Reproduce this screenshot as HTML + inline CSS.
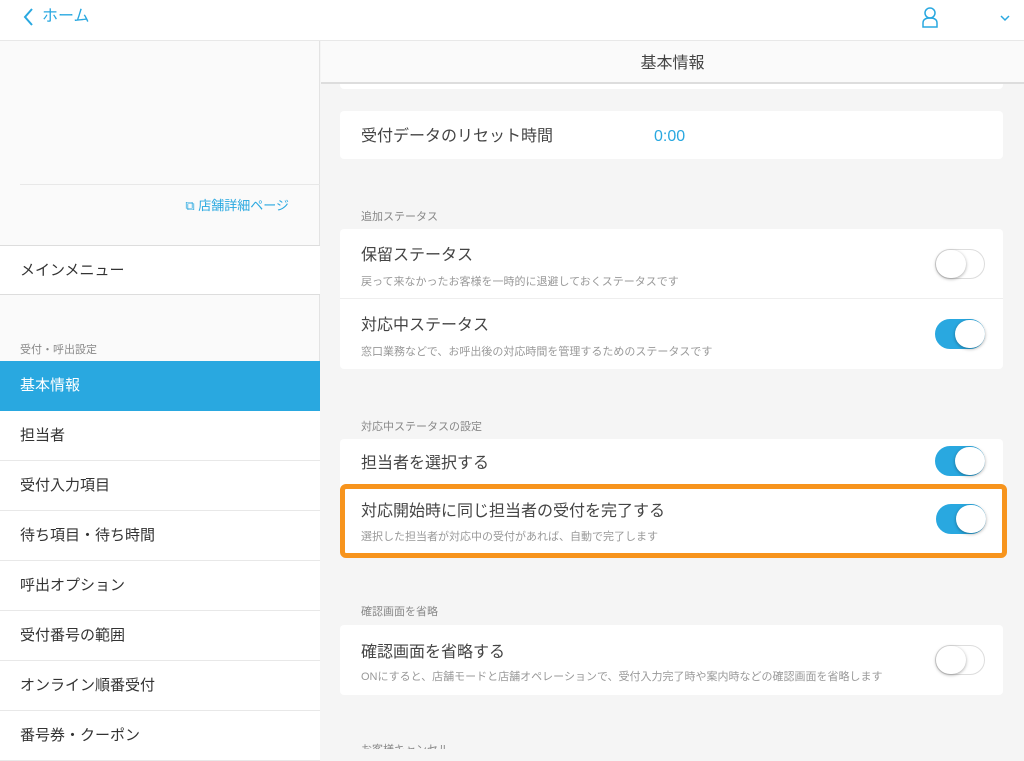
<!DOCTYPE html><html><head><meta charset="utf-8"><style>
*{box-sizing:border-box;margin:0;padding:0}
body{width:1024px;height:749px;overflow:hidden;font-family:"Liberation Sans","Noto Sans CJK JP",sans-serif;background:#f5f5f5;position:relative;color:#333}
.hdr{position:absolute;left:0;top:0;width:1024px;height:41px;background:#fff;border-bottom:1px solid #e8e8e8}
.side{position:absolute;left:0;top:41px;width:320px;height:708px;background:#fafafa;border-right:1px solid #e3e3e3}
.main{position:absolute;left:321px;top:41px;width:703px;height:708px;background:#f5f5f5;overflow:hidden}
.tb{position:absolute;left:0;top:0;width:703px;height:43px;background:#fafafa;border-bottom:2px solid #ddd;text-align:center;line-height:45px;font-size:16px;color:#444}
.card{position:absolute;left:19px;width:663px;background:#fff;border-radius:4px}
.t{position:absolute;left:21px;font-size:16px;line-height:20px;color:#444;margin-top:3px}
.s{position:absolute;left:21px;font-size:11px;line-height:14px;color:#999;margin-top:2px}
.lbl{position:absolute;left:40px;font-size:11px;line-height:14px;color:#888;margin-top:2px}
.tg{position:absolute;right:18px;width:50px;height:30px;border-radius:15px;background:#fff;border:1px solid #ddd}
.tg i{position:absolute;left:0;top:0;width:30px;height:28px;border-radius:14px;background:#fff;box-shadow:0 1px 3px rgba(0,0,0,.35)}
.tg.on{background:#29a8e0;border-color:#29a8e0}
.tg.on i{left:19px}
.mi{position:absolute;left:0;width:320px;height:50px;line-height:50px;padding-left:20px;font-size:15px;color:#333;background:#fff;border-bottom:1px solid #e8e8e8}
</style></head><body>
<div class="hdr">
<svg style="position:absolute;left:22px;top:7px" width="12" height="20"><path d="M10 2 L3 10 L10 18" stroke="#29a8e0" stroke-width="2" fill="none"/></svg>
<span style="position:absolute;left:42px;top:7px;font-size:16px;line-height:20px;color:#29a8e0">ホーム</span>
<svg style="position:absolute;left:920px;top:6px" width="20" height="22"><circle cx="10" cy="7" r="5" stroke="#29a8e0" stroke-width="1.5" fill="none"/><path d="M3 21 V17 Q3 12 10 12 Q17 12 17 17 V21 Z" stroke="#29a8e0" stroke-width="1.5" fill="none"/></svg>
<svg style="position:absolute;left:1000px;top:14px" width="10" height="8"><path d="M1 2 L5 6 L9 2" stroke="#29a8e0" stroke-width="1.5" fill="none"/></svg>
</div>
<div class="side">
<div style="position:absolute;left:20px;top:143px;width:300px;border-top:1px solid #e8e8e8"></div>
<span style="position:absolute;right:30px;top:157px;font-size:13px;line-height:16px;color:#29a8e0">⧉ 店舗詳細ページ</span>
<div class="mi" style="top:204px;border-top:1px solid #ddd;border-bottom:1px solid #ddd">メインメニュー</div>
<span style="position:absolute;left:20px;top:300px;font-size:11px;color:#888">受付・呼出設定</span>
<div class="mi" style="top:320px;background:#29a8e0;color:#fff;border:0">基本情報</div>
<div class="mi" style="top:370px">担当者</div>
<div class="mi" style="top:420px">受付入力項目</div>
<div class="mi" style="top:470px">待ち項目・待ち時間</div>
<div class="mi" style="top:520px">呼出オプション</div>
<div class="mi" style="top:570px">受付番号の範囲</div>
<div class="mi" style="top:620px">オンライン順番受付</div>
<div class="mi" style="top:670px">番号券・クーポン</div>
</div>
<div class="main">
<div class="card" style="top:40px;height:8px;border-radius:0 0 4px 4px"></div>
<div class="tb">基本情報</div>
<div class="card" style="top:70px;height:48px"><span class="t" style="top:13px">受付データのリセット時間</span><span class="t" style="left:314px;top:13px;color:#29a8e0">0:00</span></div>
<span class="lbl" style="top:167px">追加ステータス</span>
<div class="card" style="top:188px;height:140px">
<span class="t" style="top:14px">保留ステータス</span><span class="s" style="top:44px">戻って来なかったお客様を一時的に退避しておくステータスです</span><div class="tg" style="top:20px"><i></i></div>
<div style="position:absolute;left:0;top:69px;width:663px;border-top:1px solid #eee"></div>
<span class="t" style="top:84px">対応中ステータス</span><span class="s" style="top:114px">窓口業務などで、お呼出後の対応時間を管理するためのステータスです</span><div class="tg on" style="top:90px"><i></i></div>
</div>
<span class="lbl" style="top:377px">対応中ステータスの設定</span>
<div class="card" style="top:398px;height:118px">
<span class="t" style="top:12px">担当者を選択する</span><div class="tg on" style="top:7px"><i></i></div>
</div>
<div style="position:absolute;left:19px;top:443px;width:667px;height:74px;border:5px solid #f7941d;border-radius:6px;background:#fff"></div>
<span class="t" style="top:458px;left:40px">対応開始時に同じ担当者の受付を完了する</span><span class="s" style="top:487px;left:40px">選択した担当者が対応中の受付があれば、自動で完了します</span><div class="tg on" style="top:463px;right:38px"><i></i></div>
<span class="lbl" style="top:562px">確認画面を省略</span>
<div class="card" style="top:584px;height:70px">
<span class="t" style="top:15px">確認画面を省略する</span><span class="s" style="top:43px">ONにすると、店舗モードと店舗オペレーションで、受付入力完了時や案内時などの確認画面を省略します</span><div class="tg" style="top:20px"><i></i></div>
</div>
<span class="lbl" style="top:700px">お客様キャンセル</span>
</div>
</body></html>
